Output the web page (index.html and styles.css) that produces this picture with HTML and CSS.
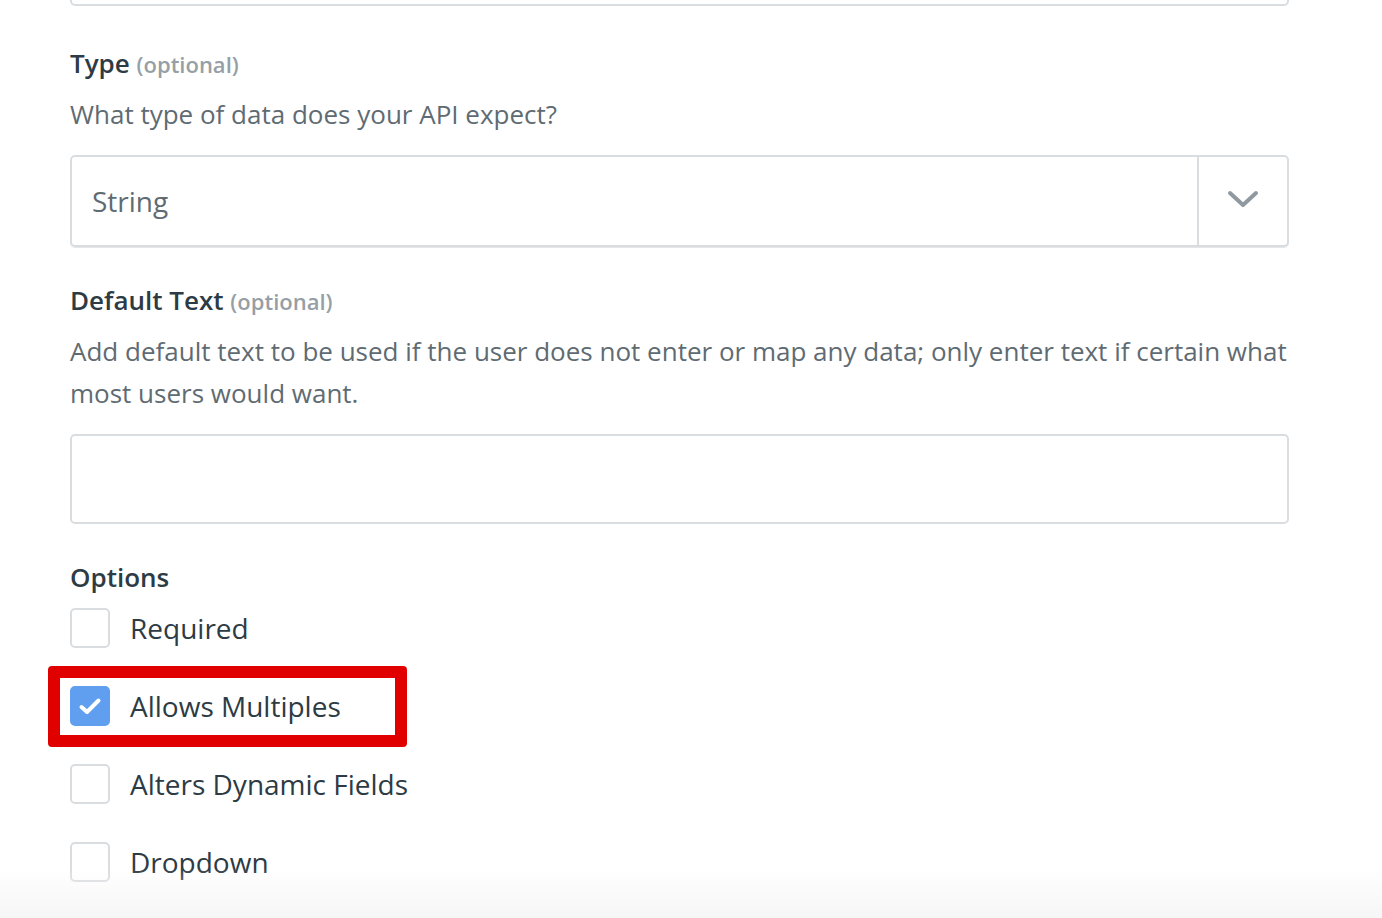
FILE: index.html
```html
<!DOCTYPE html>
<html>
<head>
<meta charset="utf-8">
<link rel="stylesheet" href="styles.css">
</head>
<body>
<div class="form">
  <div class="prev-textarea"><span class="grip"></span></div>

  <div class="field field-type">
    <div class="label">Type <span class="opt">(optional)</span></div>
    <div class="help">What type of data does your API expect?</div>
    <div class="select">
      <div class="select-value">String</div>
      <div class="select-arrow">
        <svg width="32" height="18" viewBox="0 0 32 18"><path d="M3 3 L16 15 L29 3" fill="none" stroke="#8f999f" stroke-width="4" stroke-linecap="round" stroke-linejoin="round"/></svg>
      </div>
    </div>
  </div>

  <div class="field field-default">
    <div class="label">Default Text <span class="opt">(optional)</span></div>
    <div class="help">Add default text to be used if the user does not enter or map any data; only enter text if certain what most users would want.</div>
    <div class="textarea"></div>
  </div>

  <div class="field field-options">
    <div class="label">Options</div>
    <div class="checks">
      <div class="check"><span class="box"></span><span class="check-label">Required</span></div>
      <div class="check highlighted"><span class="box on"><svg width="40" height="40" viewBox="0 0 40 40"><path d="M11.5 21 L17 26 L28.5 14.5" fill="none" stroke="#fff" stroke-width="4" stroke-linecap="round" stroke-linejoin="round"/></svg></span><span class="check-label">Allows Multiples</span><span class="annot"></span></div>
      <div class="check"><span class="box"></span><span class="check-label">Alters Dynamic Fields</span></div>
      <div class="check"><span class="box"></span><span class="check-label">Dropdown</span></div>
    </div>
  </div>
</div>
<div class="fade"></div>
</body>
</html>
```
FILE: styles.css
```css
html, body {
  margin: 0;
  padding: 0;
  background: #ffffff;
  font-family: "Open Sans", "Noto Sans", sans-serif;
  overflow: hidden;
  height: 918px;
}
.form {
  width: 1219px;
  margin-left: 70px;
}
.prev-textarea {
  height: 86px;
  margin-top: -84px;
  border: 2px solid #dadde0;
  border-radius: 5px;
  position: relative;
}
.grip {
  position: absolute;
  right: 6px;
  bottom: 1px;
  width: 10px;
  height: 4px;
  border-top: 1px dotted #888;
}
.label {
  font-size: 26px;
  font-weight: 600;
  color: #2d3b44;
  line-height: 34px;
}
.opt {
  font-size: 22px;
  color: #969fa6;
  font-weight: 600;
}
.help {
  font-size: 26px;
  line-height: 42px;
  color: #5f6b72;
  margin-top: 12px;
}
.field-type { margin-top: 40px; }
.select {
  margin-top: 20px;
  height: 88px;
  border: 2px solid #dadde0;
  border-radius: 5px;
  display: flex;
  box-shadow: 0 1px 0 #e4e7ea;
}
.select-value {
  flex: 1;
  display: flex;
  align-items: center;
  padding-left: 20px;
  font-size: 28px;
  color: #5f6b72;
}
.select-arrow {
  width: 88px;
  border-left: 2px solid #dadde0;
  display: flex;
  align-items: center;
  justify-content: center;
  padding-bottom: 4px;
}
.field-default { margin-top: 36px; }
.textarea {
  margin-top: 20px;
  height: 86px;
  border: 2px solid #dadde0;
  border-radius: 5px;
}
.field-options { margin-top: 36px; }
.checks {
  margin-top: 14px;
  display: flex;
  flex-direction: column;
  gap: 38px;
}
.check {
  display: flex;
  align-items: center;
  gap: 20px;
  height: 40px;
  position: relative;
}
.box {
  width: 36px;
  height: 36px;
  border: 2px solid #dadde0;
  border-radius: 5px;
  display: flex;
  align-items: center;
  justify-content: center;
  flex: none;
  position: relative;
}
.box.on {
  background: #609ff0;
  border-color: #609ff0;
}
.box.on svg {
  position: absolute;
  left: -2px;
  top: -2px;
}
.check-label {
  font-size: 28px;
  color: #2d3b44;
}
.annot {
  position: absolute;
  left: -22px;
  top: -20px;
  width: 335px;
  height: 57px;
  border: 12px solid #e00000;
  border-radius: 4px;
}
.fade {
  position: fixed;
  left: 0;
  right: 0;
  bottom: 0;
  height: 50px;
  background: linear-gradient(to bottom, rgba(245,245,245,0), rgba(245,245,245,0.9));
  pointer-events: none;
}
```
